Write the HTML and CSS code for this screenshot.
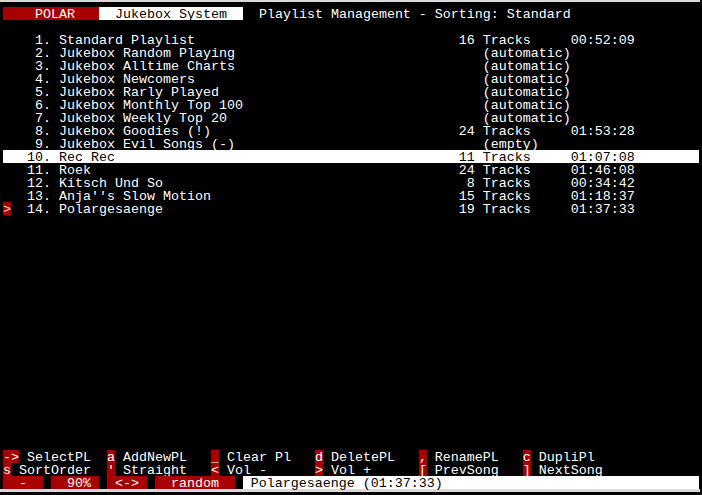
FILE: index.html
```html
<!DOCTYPE html>
<html lang="en">
<head>
  <meta charset="UTF-8" />
  <title>Polar Jukebox - Playlist Management</title>
  <link rel="stylesheet" href="styles.css">
</head>
<body>

  <div class="screen">

    <div class="row header">
      <span class="tag red">    POLAR   </span><span class="tag white">  Jukebox System  </span><span class="title">Playlist Management - Sorting: Standard</span>
    </div>

    <div class="row"></div>

    <div class="playlists">
      <div class="row pl"><span class="mark"></span><span class="num">1.</span><span class="name">Standard Playlist</span><span class="count">16</span><span class="kind">Tracks</span><span class="time">00:52:09</span></div>
      <div class="row pl"><span class="mark"></span><span class="num">2.</span><span class="name">Jukebox Random Playing</span><span class="count"></span><span class="kind">(automatic)</span><span class="time"></span></div>
      <div class="row pl"><span class="mark"></span><span class="num">3.</span><span class="name">Jukebox Alltime Charts</span><span class="count"></span><span class="kind">(automatic)</span><span class="time"></span></div>
      <div class="row pl"><span class="mark"></span><span class="num">4.</span><span class="name">Jukebox Newcomers</span><span class="count"></span><span class="kind">(automatic)</span><span class="time"></span></div>
      <div class="row pl"><span class="mark"></span><span class="num">5.</span><span class="name">Jukebox Rarly Played</span><span class="count"></span><span class="kind">(automatic)</span><span class="time"></span></div>
      <div class="row pl"><span class="mark"></span><span class="num">6.</span><span class="name">Jukebox Monthly Top 100</span><span class="count"></span><span class="kind">(automatic)</span><span class="time"></span></div>
      <div class="row pl"><span class="mark"></span><span class="num">7.</span><span class="name">Jukebox Weekly Top 20</span><span class="count"></span><span class="kind">(automatic)</span><span class="time"></span></div>
      <div class="row pl"><span class="mark"></span><span class="num">8.</span><span class="name">Jukebox Goodies (!)</span><span class="count">24</span><span class="kind">Tracks</span><span class="time">01:53:28</span></div>
      <div class="row pl"><span class="mark"></span><span class="num">9.</span><span class="name">Jukebox Evil Songs (-)</span><span class="count"></span><span class="kind">(empty)</span><span class="time"></span></div>
      <div class="row pl selected"><span class="mark"></span><span class="num">10.</span><span class="name">Rec Rec</span><span class="count">11</span><span class="kind">Tracks</span><span class="time">01:07:08</span></div>
      <div class="row pl"><span class="mark"></span><span class="num">11.</span><span class="name">Roek</span><span class="count">24</span><span class="kind">Tracks</span><span class="time">01:46:08</span></div>
      <div class="row pl"><span class="mark"></span><span class="num">12.</span><span class="name">Kitsch Und So</span><span class="count">8</span><span class="kind">Tracks</span><span class="time">00:34:42</span></div>
      <div class="row pl"><span class="mark"></span><span class="num">13.</span><span class="name">Anja''s Slow Motion</span><span class="count">15</span><span class="kind">Tracks</span><span class="time">01:18:37</span></div>
      <div class="row pl"><span class="mark playing">&gt;</span><span class="num">14.</span><span class="name">Polargesaenge</span><span class="count">19</span><span class="kind">Tracks</span><span class="time">01:37:33</span></div>
    </div>

    <div class="spacer"></div>

    <div class="keys">
      <div class="row keyrow">
        <span class="fn"><span class="key">-&gt;</span> SelectPL</span>
        <span class="fn"><span class="key">a</span> AddNewPL</span>
        <span class="fn"><span class="key">_</span> Clear Pl</span>
        <span class="fn"><span class="key">d</span> DeletePL</span>
        <span class="fn"><span class="key">,</span> RenamePL</span>
        <span class="fn"><span class="key">c</span> DupliPl</span>
      </div>
      <div class="row keyrow">
        <span class="fn"><span class="key">s</span> SortOrder</span>
        <span class="fn"><span class="key">'</span> Straight</span>
        <span class="fn"><span class="key">&lt;</span> Vol -</span>
        <span class="fn"><span class="key">&gt;</span> Vol +</span>
        <span class="fn"><span class="key">[</span> PrevSong</span>
        <span class="fn"><span class="key">]</span> NextSong</span>
      </div>
    </div>

    <div class="row status">
      <span class="box red w5">  -  </span>
      <span class="box red w6">  90% </span>
      <span class="box red w5"> &lt;-&gt; </span>
      <span class="box red w10">  random  </span>
      <span class="box white now"> Polargesaenge (01:37:33)</span>
    </div>

  </div>

</body>
</html>
```

FILE: styles.css
```css
html, body {
  margin: 0;
  padding: 0;
  background: #000;
}

.screen {
  width: 700px;
  height: 492px;
  padding: 5px 0 0 3px;
  box-sizing: border-box;
  border-top: 2px solid #d9d9d9;
  border-bottom: 3px solid #d9d9d9;
  background: #000;
  color: #fff;
  font-family: "Liberation Mono", monospace;
  font-size: 13.33px;
  line-height: 15px;
  display: flex;
  flex-direction: column;
}

.row {
  height: 13px;
  white-space: pre;
  display: flex;
  flex-shrink: 0;
}

.red {
  background: #a80000;
  color: #fff;
}

.white {
  background: #fff;
  color: #000;
}

.header .tag.red {
  width: 12ch;
}

.header .tag.white {
  width: 18ch;
}

.header .title {
  margin-left: 2ch;
}

/* playlist table */
.pl {
  width: 87ch;
}

.pl .mark {
  width: 1ch;
}

.pl .mark.playing {
  background: #a80000;
  color: #ffd0d0;
}

.pl .num {
  width: 5ch;
  text-align: right;
}

.pl .name {
  width: 50ch;
  margin-left: 1ch;
}

.pl .count {
  width: 2ch;
  text-align: right;
}

.pl .kind {
  width: 11ch;
  margin-left: 1ch;
}

.pl .time {
  width: 8ch;
}

.pl.selected {
  background: #fff;
  color: #000;
}

.spacer {
  flex: 1;
}

/* function keys */
.keyrow .fn {
  width: 13ch;
  display: flex;
}

.keyrow .key {
  background: #a80000;
  color: #fff;
}

/* status line */
.status {
  gap: 1ch;
}

.status .w5 { width: 5ch; }
.status .w6 { width: 6ch; }
.status .w10 { width: 10ch; }
.status .now { width: 57ch; }
```
